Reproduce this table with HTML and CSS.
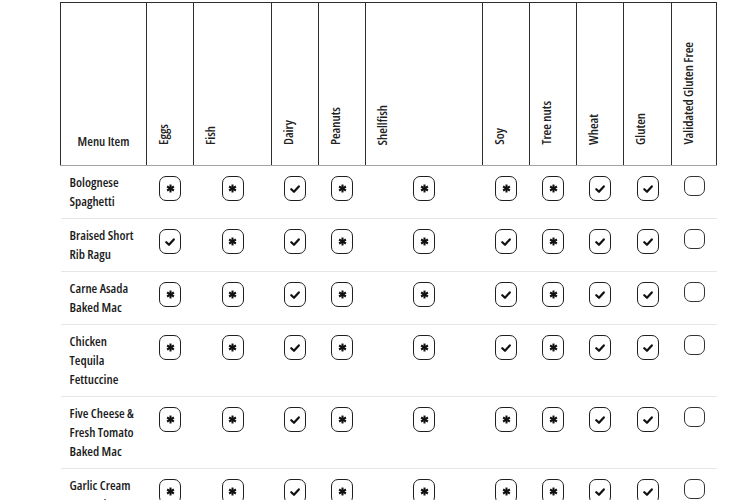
FILE: index.html
```html
<!DOCTYPE html>
<html lang="en">
<head>
<meta charset="utf-8">
<title>Allergen Menu</title>
<link rel="stylesheet" href="styles.css">
</head>
<body>
<svg class="defs" width="0" height="0" aria-hidden="true">
  <symbol id="ast" viewBox="0 0 10 10">
    <g stroke="#111" stroke-width="2.3" stroke-linecap="butt">
      <line x1="5" y1="0.6" x2="5" y2="9.4"/>
      <line x1="1.2" y1="2.8" x2="8.8" y2="7.2"/>
      <line x1="1.2" y1="7.2" x2="8.8" y2="2.8"/>
    </g>
  </symbol>
  <symbol id="chk" viewBox="0 0 10 10">
    <path d="M1.3 5.2 L4 7.8 L8.8 2.4" fill="none" stroke="#111" stroke-width="2.2" stroke-linecap="round" stroke-linejoin="round"/>
  </symbol>
</svg>
<main class="wrap">
  <table class="allergens">
    <colgroup>
      <col class="c-item"><col class="c-47"><col class="c-fish"><col class="c-47"><col class="c-47"><col class="c-shell"><col class="c-47"><col class="c-47"><col class="c-47"><col class="c-48"><col class="c-valid">
    </colgroup>
    <thead>
      <tr>
        <th class="h-item">Menu Item</th>
        <th><span class="vt">Eggs</span></th>
        <th><span class="vt">Fish</span></th>
        <th><span class="vt">Dairy</span></th>
        <th><span class="vt">Peanuts</span></th>
        <th><span class="vt">Shellfish</span></th>
        <th><span class="vt">Soy</span></th>
        <th><span class="vt">Tree nuts</span></th>
        <th><span class="vt">Wheat</span></th>
        <th><span class="vt">Gluten</span></th>
        <th><span class="vt">Validated Gluten Free</span></th>
      </tr>
    </thead>
    <tbody>
      <tr>
        <td class="item">Bolognese<br>Spaghetti</td>
        <td><span class="ic"><svg><use href="#ast"/></svg></span></td>
        <td><span class="ic"><svg><use href="#ast"/></svg></span></td>
        <td><span class="ic"><svg class="ck"><use href="#chk"/></svg></span></td>
        <td><span class="ic"><svg><use href="#ast"/></svg></span></td>
        <td><span class="ic"><svg><use href="#ast"/></svg></span></td>
        <td><span class="ic"><svg><use href="#ast"/></svg></span></td>
        <td><span class="ic"><svg><use href="#ast"/></svg></span></td>
        <td><span class="ic"><svg class="ck"><use href="#chk"/></svg></span></td>
        <td><span class="ic"><svg class="ck"><use href="#chk"/></svg></span></td>
        <td><span class="box"></span></td>
      </tr>
      <tr>
        <td class="item">Braised Short<br>Rib Ragu</td>
        <td><span class="ic"><svg class="ck"><use href="#chk"/></svg></span></td>
        <td><span class="ic"><svg><use href="#ast"/></svg></span></td>
        <td><span class="ic"><svg class="ck"><use href="#chk"/></svg></span></td>
        <td><span class="ic"><svg><use href="#ast"/></svg></span></td>
        <td><span class="ic"><svg><use href="#ast"/></svg></span></td>
        <td><span class="ic"><svg class="ck"><use href="#chk"/></svg></span></td>
        <td><span class="ic"><svg><use href="#ast"/></svg></span></td>
        <td><span class="ic"><svg class="ck"><use href="#chk"/></svg></span></td>
        <td><span class="ic"><svg class="ck"><use href="#chk"/></svg></span></td>
        <td><span class="box"></span></td>
      </tr>
      <tr>
        <td class="item">Carne Asada<br>Baked Mac</td>
        <td><span class="ic"><svg><use href="#ast"/></svg></span></td>
        <td><span class="ic"><svg><use href="#ast"/></svg></span></td>
        <td><span class="ic"><svg class="ck"><use href="#chk"/></svg></span></td>
        <td><span class="ic"><svg><use href="#ast"/></svg></span></td>
        <td><span class="ic"><svg><use href="#ast"/></svg></span></td>
        <td><span class="ic"><svg class="ck"><use href="#chk"/></svg></span></td>
        <td><span class="ic"><svg><use href="#ast"/></svg></span></td>
        <td><span class="ic"><svg class="ck"><use href="#chk"/></svg></span></td>
        <td><span class="ic"><svg class="ck"><use href="#chk"/></svg></span></td>
        <td><span class="box"></span></td>
      </tr>
      <tr>
        <td class="item">Chicken<br>Tequila<br>Fettuccine</td>
        <td><span class="ic"><svg><use href="#ast"/></svg></span></td>
        <td><span class="ic"><svg><use href="#ast"/></svg></span></td>
        <td><span class="ic"><svg class="ck"><use href="#chk"/></svg></span></td>
        <td><span class="ic"><svg><use href="#ast"/></svg></span></td>
        <td><span class="ic"><svg><use href="#ast"/></svg></span></td>
        <td><span class="ic"><svg class="ck"><use href="#chk"/></svg></span></td>
        <td><span class="ic"><svg><use href="#ast"/></svg></span></td>
        <td><span class="ic"><svg class="ck"><use href="#chk"/></svg></span></td>
        <td><span class="ic"><svg class="ck"><use href="#chk"/></svg></span></td>
        <td><span class="box"></span></td>
      </tr>
      <tr>
        <td class="item">Five Cheese &amp;<br>Fresh Tomato<br>Baked Mac</td>
        <td><span class="ic"><svg><use href="#ast"/></svg></span></td>
        <td><span class="ic"><svg><use href="#ast"/></svg></span></td>
        <td><span class="ic"><svg class="ck"><use href="#chk"/></svg></span></td>
        <td><span class="ic"><svg><use href="#ast"/></svg></span></td>
        <td><span class="ic"><svg><use href="#ast"/></svg></span></td>
        <td><span class="ic"><svg><use href="#ast"/></svg></span></td>
        <td><span class="ic"><svg><use href="#ast"/></svg></span></td>
        <td><span class="ic"><svg class="ck"><use href="#chk"/></svg></span></td>
        <td><span class="ic"><svg class="ck"><use href="#chk"/></svg></span></td>
        <td><span class="box"></span></td>
      </tr>
      <tr>
        <td class="item">Garlic Cream<br>Fettuccine</td>
        <td><span class="ic"><svg><use href="#ast"/></svg></span></td>
        <td><span class="ic"><svg><use href="#ast"/></svg></span></td>
        <td><span class="ic"><svg class="ck"><use href="#chk"/></svg></span></td>
        <td><span class="ic"><svg><use href="#ast"/></svg></span></td>
        <td><span class="ic"><svg><use href="#ast"/></svg></span></td>
        <td><span class="ic"><svg><use href="#ast"/></svg></span></td>
        <td><span class="ic"><svg><use href="#ast"/></svg></span></td>
        <td><span class="ic"><svg class="ck"><use href="#chk"/></svg></span></td>
        <td><span class="ic"><svg class="ck"><use href="#chk"/></svg></span></td>
        <td><span class="box"></span></td>
      </tr>
    </tbody>
  </table>
</main>
</body>
</html>
```

FILE: styles.css
```css
html, body {
  margin: 0;
  padding: 0;
  background: #fff;
}

body {
  font-family: "Open Sans", "Liberation Sans", sans-serif;
  font-stretch: 75%;
  color: #1b1b1b;
}

.defs {
  position: absolute;
  width: 0;
  height: 0;
  overflow: hidden;
}

.wrap {
  padding: 2px 0 0 60px;
}

.allergens {
  border-collapse: collapse;
  table-layout: fixed;
  width: 657px;
}

.c-item { width: 86px; }
.c-47 { width: 47px; }
.c-48 { width: 48px; }
.c-fish { width: 78px; }
.c-shell { width: 117px; }
.c-valid { width: 45px; }

thead tr {
  height: 163px;
}

th {
  border: 1px solid #2e2e2e;
  border-bottom-color: #a3a3a3;
  padding: 0 0 17px 9px;
  vertical-align: bottom;
  text-align: left;
  font-weight: 600;
  font-size: 13px;
  line-height: 15px;
  color: #222;
}

th.h-item {
  text-align: center;
  padding: 0 0 16px 0;
}

.vt {
  display: inline-block;
  writing-mode: vertical-rl;
  transform: rotate(180deg);
  white-space: nowrap;
}

td {
  border-bottom: 1px solid #e6e6e6;
  padding: 10px 0 0 0;
  vertical-align: top;
  text-align: center;
}

td.item {
  text-align: left;
  white-space: nowrap;
  padding: 7px 0 7px 9px;
  font-size: 13px;
  font-weight: 600;
  line-height: 19px;
}

.ic {
  display: inline-flex;
  align-items: center;
  justify-content: center;
  box-sizing: border-box;
  width: 22px;
  height: 25px;
  border: 1.5px solid #1f1f1f;
  border-radius: 7px;
  vertical-align: top;
}

.ic svg {
  width: 9px;
  height: 9px;
  display: block;
}

.ic svg.ck {
  width: 10px;
  height: 10px;
}

.box {
  display: inline-block;
  box-sizing: border-box;
  width: 21px;
  height: 20px;
  border: 1.5px solid #333;
  border-radius: 7px;
  vertical-align: top;
}
```
